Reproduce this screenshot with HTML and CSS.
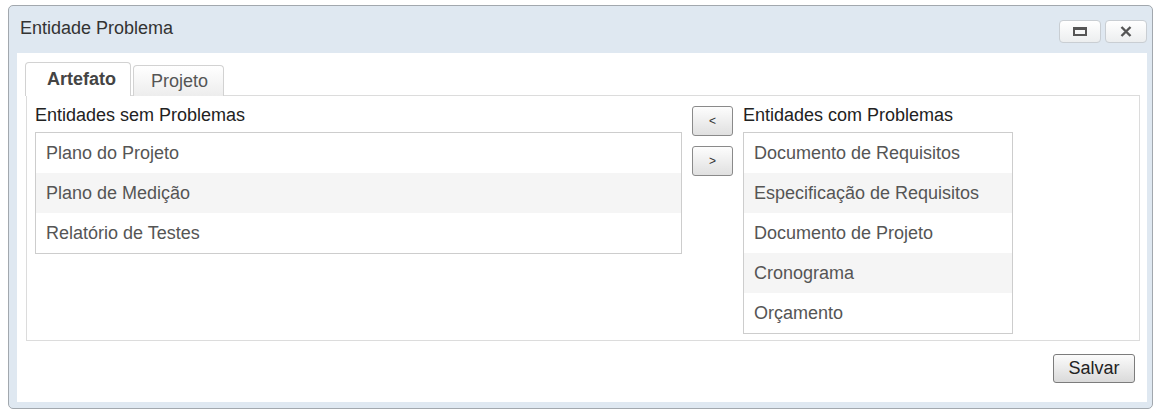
FILE: index.html
```html
<!DOCTYPE html>
<html lang="pt-BR">
<head>
<meta charset="utf-8">
<title>Entidade Problema</title>
<link rel="stylesheet" href="styles.css">
</head>
<body>
<div class="window">
  <div class="titlebar">
    <span class="title">Entidade Problema</span>
    <div class="win-actions">
      <button class="win-btn" type="button" aria-label="Maximizar">
        <svg width="14" height="9" viewBox="0 0 14 9"><rect x="1" y="1.5" width="12" height="6.5" fill="none" stroke="#555" stroke-width="2"/><rect x="0" y="0" width="14" height="3" fill="#555"/></svg>
      </button>
      <button class="win-btn" type="button" aria-label="Fechar">
        <svg width="12" height="11" viewBox="0 0 12 11"><path d="M1.5 1 L10.5 10 M10.5 1 L1.5 10" stroke="#555" stroke-width="2.4" stroke-linecap="butt"/></svg>
      </button>
    </div>
  </div>
  <div class="content">
    <div class="tabs">
      <div class="tab active">Artefato</div>
      <div class="tab">Projeto</div>
    </div>
    <div class="panel">
      <div class="col col-left">
        <div class="label">Entidades sem Problemas</div>
        <ul class="list">
          <li>Plano do Projeto</li>
          <li>Plano de Medição</li>
          <li>Relatório de Testes</li>
        </ul>
      </div>
      <div class="movers">
        <button class="move-btn" type="button">&lt;</button>
        <button class="move-btn" type="button">&gt;</button>
      </div>
      <div class="col col-right">
        <div class="label">Entidades com Problemas</div>
        <ul class="list">
          <li>Documento de Requisitos</li>
          <li>Especificação de Requisitos</li>
          <li>Documento de Projeto</li>
          <li>Cronograma</li>
          <li>Orçamento</li>
        </ul>
      </div>
    </div>
    <div class="footer">
      <button class="btn" type="button">Salvar</button>
    </div>
  </div>
</div>
</body>
</html>
```
FILE: styles.css
```css
* { box-sizing: border-box; }

body {
  margin: 0;
  background: #fff;
  font-family: "Liberation Sans", Arial, sans-serif;
  font-size: 18px;
}

/* dialog frame */
.window {
  margin: 5px 0 0 8px;
  width: 1145px;
  height: 404px;
  border: 1px solid #a2a8ae;
  border-radius: 5px;
  background: #dfe8f1;
  padding: 0 5px 6px 8px;
  display: flex;
  flex-direction: column;
}

.titlebar {
  height: 47px;
  flex: none;
  display: flex;
  align-items: center;
  justify-content: space-between;
}

.title {
  padding-left: 3px;
  color: #333;
  margin-top: -2px;
}

.win-actions {
  display: flex;
  gap: 4px;
  margin-top: 4px;
}

.win-btn {
  width: 42px;
  height: 23px;
  border: 1px solid #c9ced3;
  border-radius: 4px;
  background: linear-gradient(#ffffff, #eceeef);
  display: flex;
  align-items: center;
  justify-content: center;
  padding: 0;
}

.content {
  flex: 1;
  background: #fff;
  padding: 9px 7px 0 8px;
  display: flex;
  flex-direction: column;
}

/* tabs */
.tabs {
  display: flex;
  align-items: flex-end;
  gap: 2px;
  margin-bottom: -1px;
  position: relative;
  z-index: 1;
}

.tab {
  height: 31px;
  line-height: 30px;
  padding: 0 15px 0 17px;
  border: 1px solid #d2d2d2;
  border-bottom: none;
  border-radius: 4px 4px 0 0;
  background: linear-gradient(#ffffff, #ededed);
  color: #555;
}

.tab.active {
  height: 34px;
  line-height: 32px;
  padding: 0 14px 0 21px;
  background: #fff;
  color: #444;
  font-weight: bold;
}

.panel {
  margin-left: 1px;
  border: 1px solid #dcdcdc;
  padding: 10px 8px 6px 8px;
  display: flex;
  gap: 10px;
  align-items: flex-start;
}

.col-left { width: 647px; }
.col-right { width: 270px; }

.label {
  line-height: 18px;
  color: #222;
  margin-bottom: 8px;
  white-space: nowrap;
}

.list {
  list-style: none;
  margin: 0;
  padding: 0;
  border: 1px solid #cdcdcd;
}

.list li {
  height: 40px;
  line-height: 40px;
  padding-left: 10px;
  color: #555;
  white-space: nowrap;
}

.list li:nth-child(even) { background: #f5f5f5; }

.movers {
  width: 41px;
  display: flex;
  flex-direction: column;
  gap: 10px;
}

.move-btn {
  width: 41px;
  height: 30px;
  padding: 0;
  border: 1px solid #8a8a8a;
  border-radius: 3px;
  background: linear-gradient(#fdfdfd, #e0e0e0);
  font-family: "Liberation Sans", Arial, sans-serif;
  font-size: 12px;
  color: #333;
}

.footer {
  display: flex;
  justify-content: flex-end;
  padding: 13px 5px 0 0;
}

.btn {
  width: 82px;
  height: 29px;
  padding: 0;
  border: 1px solid #7c7c7c;
  border-radius: 3px;
  background: linear-gradient(#fbfbfb, #dadada);
  font-family: "Liberation Sans", Arial, sans-serif;
  font-size: 18px;
  color: #222;
}
```
